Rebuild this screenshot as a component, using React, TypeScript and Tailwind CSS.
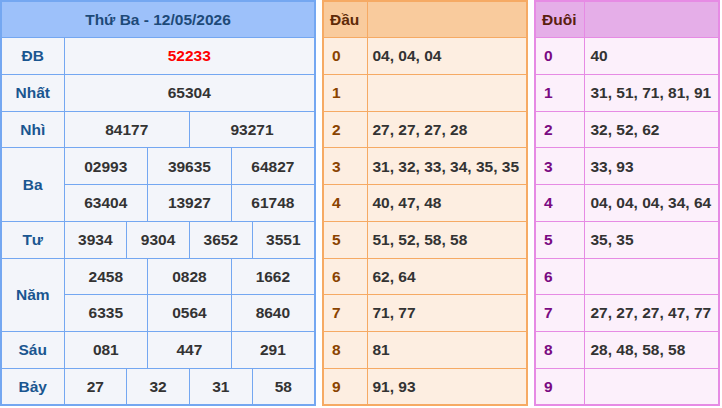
import React from "react";

type Group = { label: string; lines: string[][] };

const prizes: Group[] = [
  { label: "ĐB", lines: [["52233"]] },
  { label: "Nhất", lines: [["65304"]] },
  { label: "Nhì", lines: [["84177", "93271"]] },
  {
    label: "Ba",
    lines: [
      ["02993", "39635", "64827"],
      ["63404", "13927", "61748"],
    ],
  },
  { label: "Tư", lines: [["3934", "9304", "3652", "3551"]] },
  {
    label: "Năm",
    lines: [
      ["2458", "0828", "1662"],
      ["6335", "0564", "8640"],
    ],
  },
  { label: "Sáu", lines: [["081", "447", "291"]] },
  { label: "Bảy", lines: [["27", "32", "31", "58"]] },
];

const dau = [
  "04, 04, 04",
  "",
  "27, 27, 27, 28",
  "31, 32, 33, 34, 35, 35",
  "40, 47, 48",
  "51, 52, 58, 58",
  "62, 64",
  "71, 77",
  "81",
  "91, 93",
];

const duoi = [
  "40",
  "31, 51, 71, 81, 91",
  "32, 52, 62",
  "33, 93",
  "04, 04, 04, 34, 64",
  "35, 35",
  "",
  "27, 27, 27, 47, 77",
  "28, 48, 58, 58",
  "",
];

const font = "font-['Liberation_Sans',Arial,sans-serif] font-bold text-[15.5px]";

// Bảng kết quả chính
function ResultTable() {
  return (
    <table className="w-[316px] h-[406px] table-fixed border-collapse border-2 border-[#74a7f1] bg-[#f3f5fa] text-[#333]">
      <colgroup>
        <col className="w-[63px]" />
        {Array.from({ length: 12 }).map((_, i) => (
          <col key={i} />
        ))}
      </colgroup>
      <tbody>
        <tr className="h-[36px]">
          <td
            colSpan={13}
            className="border border-[#74a7f1] bg-[#9dc1fa] text-center text-[#1d4a78]"
          >
            Thứ Ba - 12/05/2026
          </td>
        </tr>
        {prizes.map((g) =>
          g.lines.map((line, li) => (
            <tr key={g.label + li} className="h-[36px]">
              {li === 0 && (
                <td
                  rowSpan={g.lines.length}
                  className="border border-[#74a7f1] text-center text-[#1a5690]"
                >
                  {g.label}
                </td>
              )}
              {line.map((n, i) => (
                <td
                  key={i}
                  colSpan={12 / line.length}
                  className={`border border-[#74a7f1] text-center ${
                    g.label === "ĐB" ? "text-[#ff0000]" : ""
                  }`}
                >
                  {n}
                </td>
              ))}
            </tr>
          ))
        )}
      </tbody>
    </table>
  );
}

function DauTable() {
  return (
    <table className="w-[206px] h-[406px] table-fixed border-collapse border-2 border-[#f6aa64] bg-[#fdeee1] text-[#333]">
      <colgroup>
        <col className="w-[44px]" />
        <col />
      </colgroup>
      <tbody>
        <tr className="h-[36px] bg-[#f9cb9d]">
          <td className="border border-[#f6aa64] pl-[6px] text-[#5e2a08]">Đầu</td>
          <td className="border border-[#f6aa64]" />
        </tr>
        {dau.map((v, i) => (
          <tr key={i} className="h-[36px]">
            <td className="border border-[#f6aa64] pl-[8px] text-[#8a4300]">{i}</td>
            <td className="border border-[#f6aa64] pl-[5px] whitespace-nowrap">{v}</td>
          </tr>
        ))}
      </tbody>
    </table>
  );
}

function DuoiTable() {
  return (
    <table className="w-[186px] h-[406px] table-fixed border-collapse border-2 border-[#e68be4] bg-[#fcf0fb] text-[#333]">
      <colgroup>
        <col className="w-[49px]" />
        <col />
      </colgroup>
      <tbody>
        <tr className="h-[36px] bg-[#e5aee8]">
          <td className="border border-[#e68be4] pl-[6px] text-[#5a2010]">Đuôi</td>
          <td className="border border-[#e68be4]" />
        </tr>
        {duoi.map((v, i) => (
          <tr key={i} className="h-[36px]">
            <td className="border border-[#e68be4] pl-[8px] text-[#7a0a82]">{i}</td>
            <td className="border border-[#e68be4] pl-[6px] whitespace-nowrap">{v}</td>
          </tr>
        ))}
      </tbody>
    </table>
  );
}

export default function App() {
  return (
    <div className={`flex gap-[6px] w-[722px] h-[408px] bg-white ${font}`}>
      <ResultTable />
      <DauTable />
      <DuoiTable />
    </div>
  );
}
